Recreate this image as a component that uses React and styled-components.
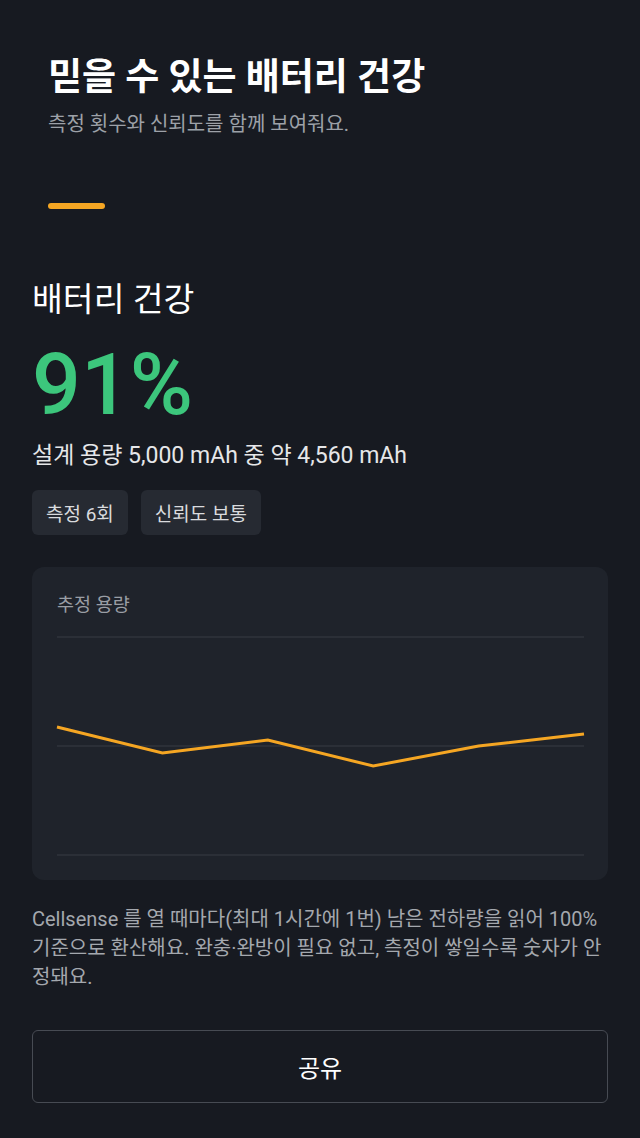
import React from "react";
import styled, { createGlobalStyle } from "styled-components";

const Global = createGlobalStyle`
  html, body { margin: 0; padding: 0; background: #171a21; }
  body { font-family: Roboto, "Noto Sans CJK KR", sans-serif; color: #ffffff; }
  * { box-sizing: border-box; }
`;

const Page = styled.div`
  width: 640px;
  min-height: 1138px;
  background: #171a21;
  display: flex;
  flex-direction: column;
`;

const Header = styled.header`
  padding: 56px 48px 0;
  display: flex;
  flex-direction: column;
`;

const Title = styled.h1`
  margin: 0;
  font-size: 37px;
  font-weight: 700;
  line-height: 44px;
  color: #ffffff;
  white-space: nowrap;
`;

const Subtitle = styled.p`
  margin: 12px 0 0;
  font-size: 20px;
  line-height: 24px;
  color: #9da1a8;
`;

const Accent = styled.div`
  width: 57px;
  height: 6px;
  border-radius: 3px;
  background: #f5a623;
  margin-top: 67px;
`;

const Content = styled.main`
  padding: 71px 32px 0;
  display: flex;
  flex-direction: column;
`;

const SectionTitle = styled.h2`
  margin: 0;
  font-size: 33.5px;
  font-weight: 400;
  line-height: 40px;
  color: #ffffff;
`;

const Percent = styled.div`
  margin-top: 17px;
  font-size: 86px;
  font-weight: 500;
  line-height: 96px;
  color: #3cc67c;
`;

const Capacity = styled.p`
  margin: 8px 0 0;
  font-size: 23px;
  line-height: 30px;
  color: #e6e7e9;
  white-space: nowrap;
`;

const Chips = styled.div`
  display: flex;
  gap: 13px;
  margin-top: 19px;
`;

const Chip = styled.span`
  height: 45px;
  padding: 0 14px;
  display: inline-flex;
  align-items: center;
  border-radius: 6px;
  background: #262a32;
  color: #d9dbde;
  font-size: 19px;
`;

const Card = styled.section`
  margin-top: 32px;
  background: #1f232b;
  border-radius: 12px;
  padding: 26px 24px 23px 25px;
  display: flex;
  flex-direction: column;
`;

const CardLabel = styled.div`
  font-size: 18.5px;
  line-height: 24px;
  color: #9a9ea5;
`;

const Chart = styled.svg`
  display: block;
  margin-top: 18px;
  width: 527px;
  height: 222px;
  overflow: visible;
`;

const Note = styled.p`
  margin: 25px 0 0;
  font-size: 20px;
  line-height: 29px;
  color: #a4a8ae;
`;

const ShareButton = styled.button`
  margin-top: 38px;
  height: 73px;
  width: 100%;
  background: transparent;
  border: 1.5px solid #474b53;
  border-radius: 6px;
  color: #ffffff;
  font-family: inherit;
  font-size: 24px;
  cursor: pointer;
`;

const values = [727, 753, 740, 766, 746, 734];
const gridLines = [2, 111, 220];

export default function App() {
  const pts = values.map((y, i) => `${(i * 527) / 5},${y - 635}`).join(" ");
  return (
    <>
      <Global />
      <Page>
        <Header>
          <Title>믿을 수 있는 배터리 건강</Title>
          <Subtitle>측정 횟수와 신뢰도를 함께 보여줘요.</Subtitle>
          <Accent />
        </Header>
        <Content>
          <SectionTitle>배터리 건강</SectionTitle>
          <Percent>91%</Percent>
          <Capacity>설계 용량 5,000 mAh 중 약 4,560 mAh</Capacity>
          <Chips>
            <Chip>측정 6회</Chip>
            <Chip>신뢰도 보통</Chip>
          </Chips>
          <Card>
            <CardLabel>추정 용량</CardLabel>
            <Chart viewBox="0 0 527 222">
              {gridLines.map((y) => (
                <line key={y} x1="0" x2="527" y1={y} y2={y} stroke="#30343c" strokeWidth="1.5" />
              ))}
              <polyline points={pts} fill="none" stroke="#f5a623" strokeWidth="3" />
            </Chart>
          </Card>
          <Note>
            Cellsense 를 열 때마다(최대 1시간에 1번) 남은 전하량을 읽어 100% 기준으로 환산해요. 완충·완방이 필요 없고, 측정이 쌓일수록 숫자가 안정돼요.
          </Note>
          <ShareButton>공유</ShareButton>
        </Content>
      </Page>
    </>
  );
}
